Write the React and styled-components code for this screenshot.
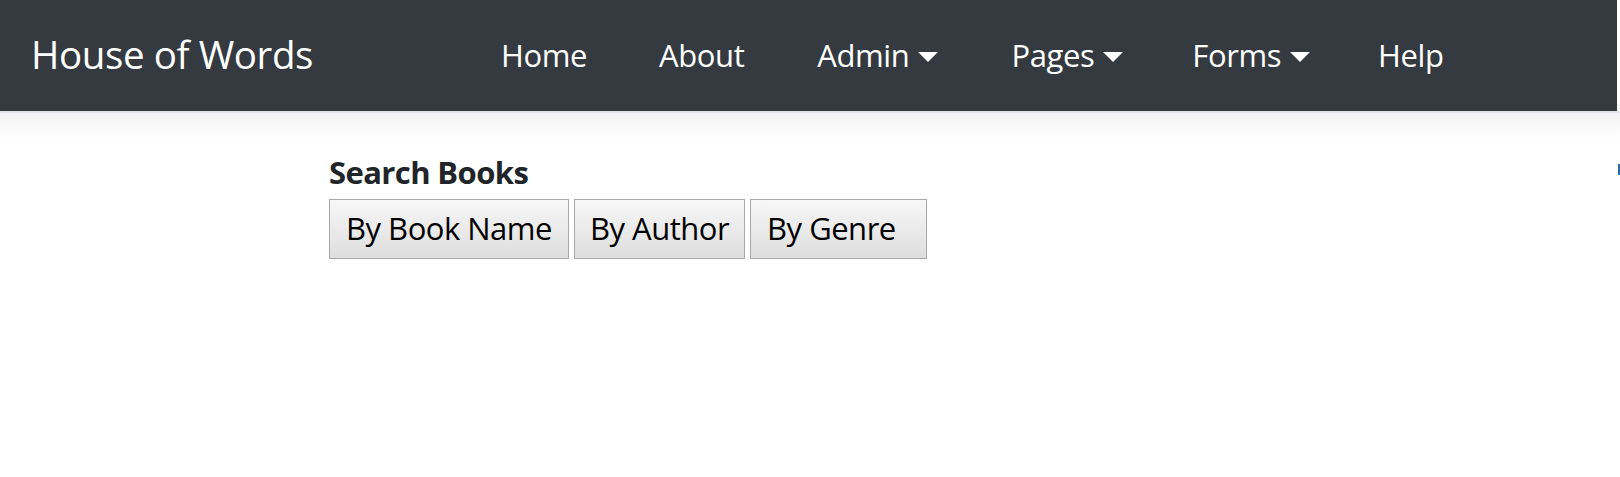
import React from "react";
import styled, { createGlobalStyle } from "styled-components";

const Global = createGlobalStyle`
  html, body { margin: 0; padding: 0; background: #fff; }
  body { font-family: "Open Sans", "Noto Sans", sans-serif; color: #212529; }
  * { box-sizing: border-box; }
`;

const Navbar = styled.nav`
  display: flex;
  align-items: center;
  height: 111px;
  width: calc(100% - 3px);
  padding: 0 32px 0 31px;
  background: #343a40;
  position: relative;
  z-index: 1;
`;

const Brand = styled.a`
  font-size: 38.5px;
  color: #fff;
  text-decoration: none;
  margin-top: -3px;
  letter-spacing: -0.4px;
`;

const NavList = styled.ul`
  display: flex;
  align-items: center;
  list-style: none;
  margin: 0 0 0 188px;
  padding: 0;
`;

const NavItem = styled.li`
  display: flex;
  align-items: center;
  padding-right: ${(p) => p.$gap}px;
  font-size: 31px;
  color: #fff;
  letter-spacing: -0.4px;
  margin-top: -2px;
`;

const Caret = styled.span`
  display: inline-block;
  width: 0;
  height: 0;
  margin-left: 9px;
  margin-top: 4px;
  border-left: 10px solid transparent;
  border-right: 10px solid transparent;
  border-top: 10px solid #fff;
`;

const Shadow = styled.div`
  height: 28px;
  border-top: 2px solid #dfe3e8;
  background: linear-gradient(#f3f3f3, #ffffff);
`;

const Main = styled.main`
  padding: 16px 0 0 329px;
`;

const Heading = styled.h2`
  margin: 0;
  font-size: 31px;
  font-weight: 700;
  line-height: 35px;
  color: #212529;
  letter-spacing: -0.6px;
`;

const ButtonRow = styled.div`
  display: flex;
  gap: 5px;
  margin-top: 9px;
`;

const TabButton = styled.button`
  height: 60px;
  padding: 0 ${(p) => p.$padRight}px 2px ${(p) => p.$padLeft}px;
  font-family: "Open Sans", "Noto Sans", sans-serif;
  font-size: 31px;
  letter-spacing: -0.5px;
  color: #000;
  border: 1px solid #a9a9a9;
  border-radius: 0;
  background: linear-gradient(#f7f7f7, #dedede);
  cursor: pointer;
`;

const EdgeMark = styled.span`
  position: absolute;
  right: 0;
  top: 164px;
  width: 2px;
  height: 11px;
  background: #2a6bb0;
`;

const navItems = [
  { label: "Home", gap: 72 },
  { label: "About", gap: 73 },
  { label: "Admin", caret: true, gap: 73 },
  { label: "Pages", caret: true, gap: 69 },
  { label: "Forms", caret: true, gap: 68 },
  { label: "Help", gap: 0 },
];

export default function App() {
  return (
    <>
      <Global />
      <Navbar>
        <Brand href="#">House of Words</Brand>
        <NavList>
          {navItems.map((it) => (
            <NavItem key={it.label} $gap={it.gap}>
              {it.label}
              {it.caret && <Caret />}
            </NavItem>
          ))}
        </NavList>
      </Navbar>
      <Shadow />
      <EdgeMark />
      <Main>
        <Heading>Search Books</Heading>
        <ButtonRow>
          <TabButton $padLeft={16} $padRight={16}>By Book Name</TabButton>
          <TabButton $padLeft={15} $padRight={15}>By Author</TabButton>
          <TabButton $padLeft={16} $padRight={30}>By Genre</TabButton>
        </ButtonRow>
      </Main>
    </>
  );
}
